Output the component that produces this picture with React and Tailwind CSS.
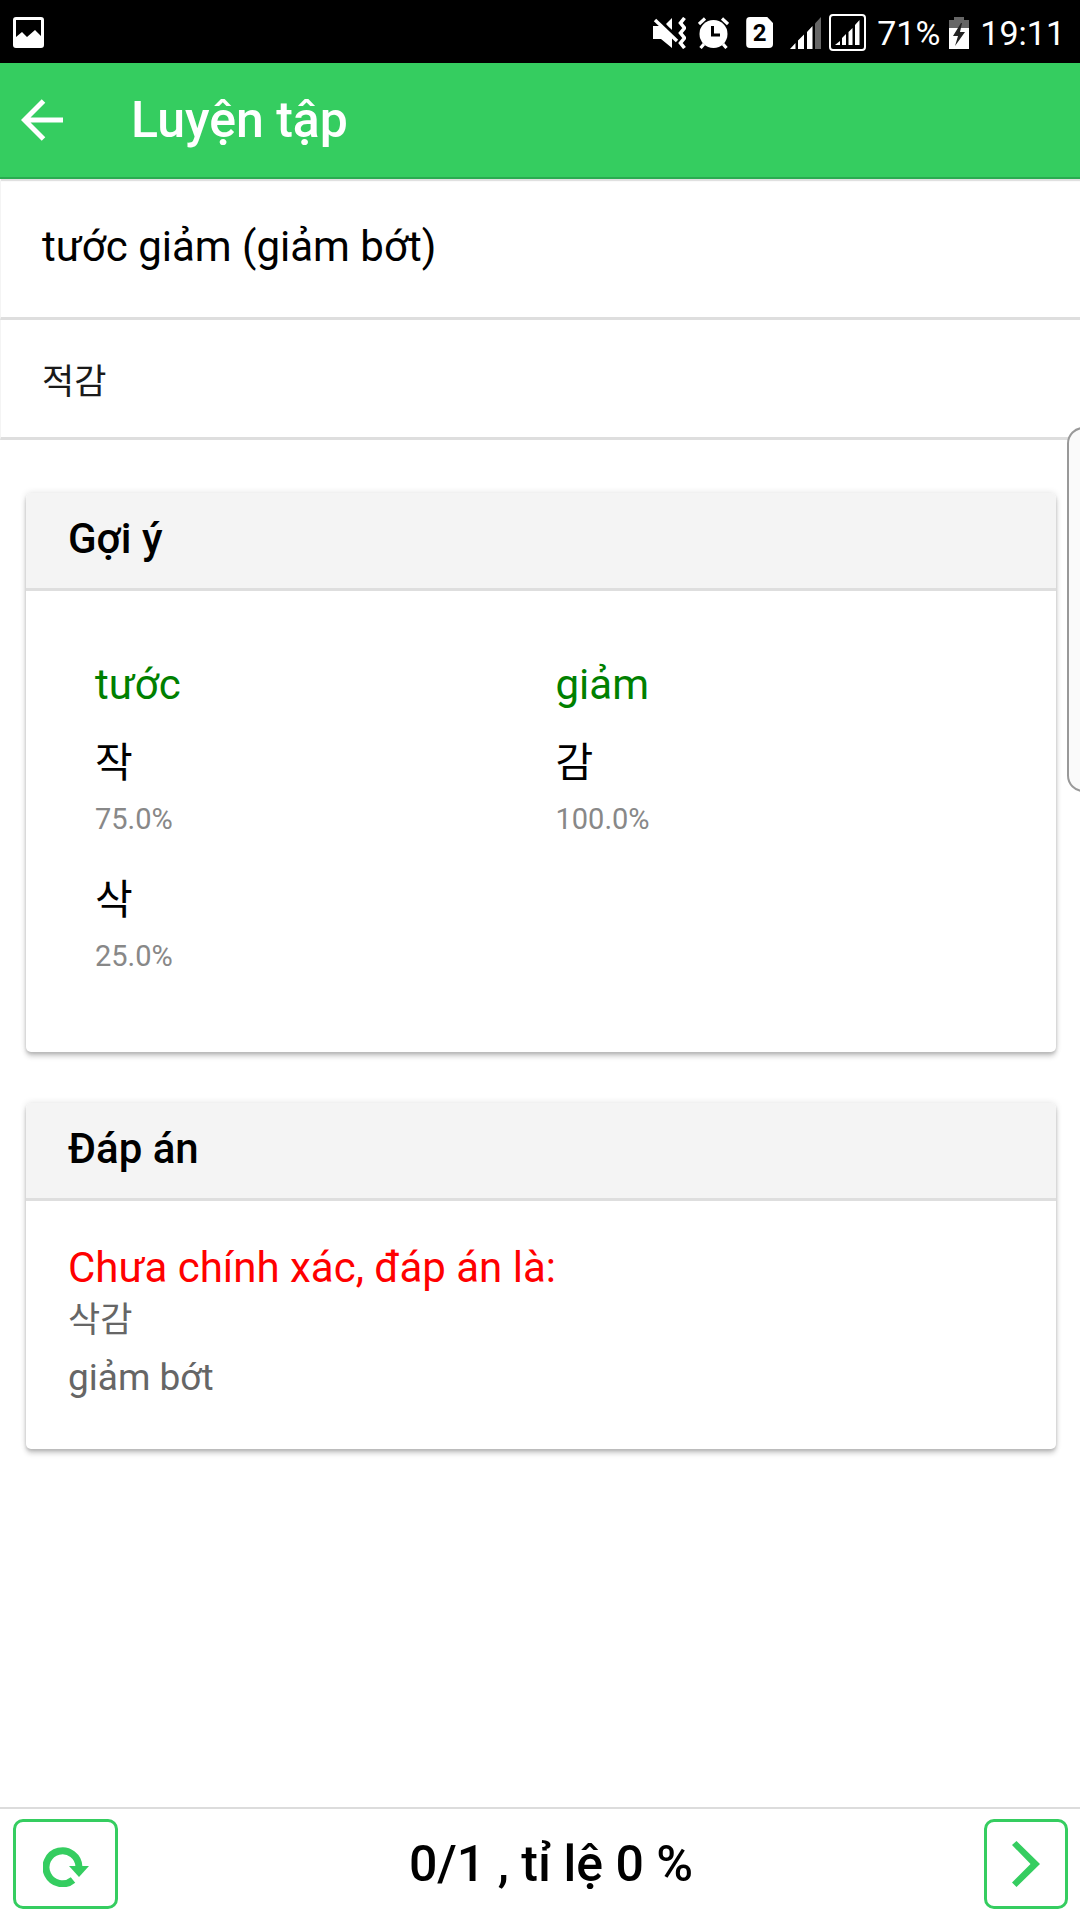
const hints = [
  {
    word: "tước",
    options: [
      { text: "작", rate: "75.0%" },
      { text: "삭", rate: "25.0%" },
    ],
  },
  {
    word: "giảm",
    options: [{ text: "감", rate: "100.0%" }],
  },
];

function StatusBar() {
  return (
    <div className="flex h-[63px] shrink-0 items-center justify-between bg-black pl-[13px] pr-[15px] pt-0.5 text-white">
      <svg className="h-[31px] w-[31px]" viewBox="0 0 31 31" fill="currentColor">
        <path
          fillRule="evenodd"
          d="M3 0H28a3 3 0 0 1 3 3V28a3 3 0 0 1-3 3H3a3 3 0 0 1-3-3V3a3 3 0 0 1 3-3ZM3 3V20L9 15L14 20L22 13L28 19V3Z"
        />
      </svg>
      <div className="flex items-center">
        {/* muted, vibrate */}
        <svg className="mr-3 h-8 w-[33px]" viewBox="0 0 33 32" fill="currentColor">
          <path d="M0 9H8L19 20V31L8 22H0Z" />
          <path d="M13 7L19 1V15Z" />
          <path d="M4 1L27 22" stroke="#000" strokeWidth="2.5" />
          <path d="M2 3L24 24" stroke="currentColor" strokeWidth="3.4" />
          <path d="M31.500 1L27.500 6L31.500 11L27.500 16L31.500 21L27.500 26L31.500 31" fill="none" stroke="currentColor" strokeWidth="3.6" />
        </svg>
        {/* alarm */}
        <svg className="mr-[17px] h-8 w-[31px]" viewBox="0 0 31 32" fill="none" stroke="currentColor">
          <circle cx="15.5" cy="17" r="14" fill="currentColor" stroke="none" />
          <path d="M1 7L7 1.500M30 7L24 1.500M6 27L2.500 31M25 27L28.500 31" strokeWidth="3.2" />
          <path d="M14.500 9V18H22" stroke="#000" strokeWidth="3" />
        </svg>
        {/* active sim */}
        <span className="mr-[17px] flex h-[31px] w-[27px] items-center justify-center rounded-sm bg-white text-[24px] font-bold leading-none text-black [clip-path:polygon(0_0,78%_0,100%_20%,100%_100%,0_100%)]">
          2
        </span>
        <svg className="mr-2 h-8 w-[31px]" viewBox="0 0 31 32" fill="currentColor">
          <path d="M0 32L5.500 26V32ZM8 23.500L14 17.500V32H8ZM17 15L22.500 9V32H17Z" />
          <path d="M25 6.500L31 0V32H25Z" fill="#666" />
        </svg>
        <svg className="mr-[11px] h-[37px] w-[37px]" viewBox="0 0 37 37" fill="currentColor">
          <rect x="1" y="1" width="35" height="35" rx="3" fill="none" stroke="currentColor" strokeWidth="2" />
          <path d="M6 31L11 27V31ZM13 24L17 20V31H13ZM19.500 18L23.500 14V31H19.500ZM26 11L30.500 6V31H26Z" />
        </svg>
        <span className="mr-[9px] text-[34px] leading-none">71%</span>
        <svg className="mr-[11px] h-8 w-5" viewBox="0 0 20 32">
          <path d="M0 3H5V0H15V3H20V32H0Z" fill="#666" />
          <path d="M0 11H20V32H0Z" fill="#fff" />
          <path d="M12 6L4 19H9L6 29L16 15H11L13 6Z" fill="#222" />
        </svg>
        <span className="text-[34px] leading-none">19:11</span>
      </div>
    </div>
  );
}

function Card({ title, children }) {
  return (
    <section className="rounded-[5px] bg-white shadow-[0_5px_5px_0_rgba(0,0,0,0.14),0_2px_3px_0_rgba(0,0,0,0.12),0_0_7px_0_rgba(0,0,0,0.12)]">
      <h2 className="h-[98px] rounded-t-[5px] border-b-3 border-[#dedede] bg-[#f4f4f4] px-[42px] pt-[21px] text-[42px] font-medium leading-[50px]">
        {title}
      </h2>
      {children}
    </section>
  );
}

export default function App() {
  return (
    <div className="relative flex min-h-screen flex-col overflow-hidden bg-white font-['Roboto','Noto_Sans_CJK_KR',sans-serif] text-black">
      <StatusBar />
      <header className="flex h-[116px] items-center border-b-2 border-[#2aab50] bg-[#35cd60] pl-[21px] text-white shadow-[0_2px_1px_rgba(0,0,0,0.12)]">
        <button type="button" aria-label="Back" className="mr-[68px]">
          <svg className="h-[42px] w-[42px]" viewBox="0 0 42 42" fill="none" stroke="currentColor" strokeWidth="5">
            <path d="M42 21H4M22.500 2L3.500 21L22.500 40" />
          </svg>
        </button>
        <h1 className="text-[50px] font-medium leading-[60px]">Luyện tập</h1>
      </header>

      <main className="flex-1">
        <p className="flex h-[141px] items-center border-b-3 border-l border-[#dedede] border-l-[#f4f4f4] px-[41px] pb-0.5 text-[42px] leading-[50px]">
          tước giảm (giảm bớt)
        </p>
        <input
          type="text"
          aria-label="Câu trả lời"
          defaultValue="적감"
          className="block h-[120px] w-full border-b-3 border-l border-[#dedede] border-l-[#f4f4f4] px-[41px] text-[35px] text-[#1a1a1a] outline-none"
        />

        <div className="flex flex-col gap-[51px] pl-[26px] pr-6 pt-[53px]">
          <Card title="Gợi ý">
            <div className="grid grid-cols-2 pb-[53px] pl-[69px] pr-10 pt-[69px]">
              {hints.map((hint) => (
                <div key={hint.word}>
                  <h3 className="mb-[15px] text-[42px] leading-[50px] text-[#008000]">{hint.word}</h3>
                  {hint.options.map((option) => (
                    <div key={option.text} className="h-[137px] pt-2">
                      <p className="text-[41px] leading-[60px]">{option.text}</p>
                      <p className="text-[29px] leading-[52px] text-[#888]">{option.rate}</p>
                    </div>
                  ))}
                </div>
              ))}
            </div>
          </Card>

          <Card title="Đáp án">
            <div className="px-[42px] pb-[42px] pt-[42px]">
              <p className="text-[42px] leading-[50px] text-[#f00]">Chưa chính xác, đáp án là:</p>
              <p className="text-[35px] leading-[56px] text-[#666]">삭감</p>
              <p className="text-[37px] leading-[58px] text-[#666]">giảm bớt</p>
            </div>
          </Card>
        </div>
      </main>

      <footer className="flex h-[113px] items-center justify-between border-t-2 border-[#dcdcdc] pb-0.5 pl-[13px] pr-3">
        <button
          type="button"
          aria-label="Retry"
          className="flex h-[90px] w-[105px] items-center justify-center rounded-[10px] border-3 border-[#35cd60] text-[#35cd60]"
        >
          <svg className="mt-1.5 h-10 w-[46px]" viewBox="0 0 46 40">
            <path d="M30 33A16.500 16.500 0 1 1 36 20" fill="none" stroke="currentColor" strokeWidth="7" />
            <path d="M26 19H46L36 30Z" fill="currentColor" />
          </svg>
        </button>
        <p className="text-[50px] font-medium leading-[60px]">0/1 , tỉ lệ 0 %</p>
        <button
          type="button"
          aria-label="Next"
          className="flex h-[90px] w-[84px] items-center justify-center rounded-[10px] border-3 border-[#35cd60] text-[#35cd60]"
        >
          <svg className="h-[46px] w-7" viewBox="0 0 28 46">
            <path d="M0 4L4.500 0L28 23L4.500 46L0 41.500L18.500 23Z" fill="currentColor" />
          </svg>
        </button>
      </footer>

      {/* edge panel handle, lies over the page */}
      <div className="absolute -right-5 top-[427px] h-[365px] w-[33px] rounded-[18px] border-2 border-[#999] bg-[#fafafa]" />
    </div>
  );
}
